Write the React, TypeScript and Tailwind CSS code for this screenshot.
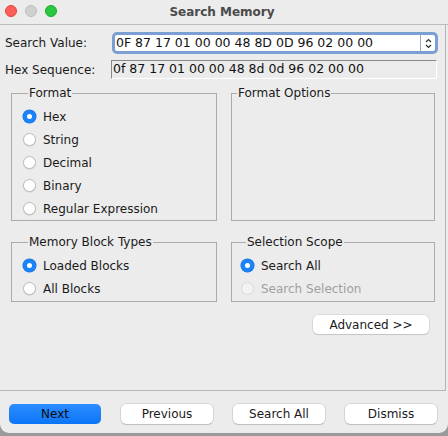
import React from 'react';

type RadioProps = { label: string; checked?: boolean; disabled?: boolean };

const Radio = ({ label, checked = false, disabled = false }: RadioProps) => (
  <div className="flex items-center h-[23px] gap-[7px]">
    {checked ? (
      <span className="w-[13px] h-[13px] rounded-full bg-[#1b83fb] flex items-center justify-center shadow-[0_0_0_0.5px_#1570d8]">
        <span className="w-[5px] h-[5px] rounded-full bg-white" />
      </span>
    ) : (
      <span
        className={`w-[13px] h-[13px] rounded-full border ${
          disabled ? 'bg-[#f3f3f3] border-[#d8d8d8]' : 'bg-white border-[#bdbdbd] shadow-[0_0.5px_1px_rgba(0,0,0,0.15)]'
        }`}
      />
    )}
    <span className={disabled ? 'text-[#a0a0a0]' : 'text-[#1a1a1a]'}>{label}</span>
  </div>
);

type GroupProps = { title: string; className: string; children?: React.ReactNode };

const Group = ({ title, className, children }: GroupProps) => (
  <fieldset className={`border border-[#ababab] ${className}`}>
    <legend className="ml-[5px] px-[1px] leading-[14px] text-[#1a1a1a]">{title}</legend>
    {children}
  </fieldset>
);

const Button = ({ label, primary = false }: { label: string; primary?: boolean }) => (
  <div
    className={`w-[92px] h-[20px] rounded-[5px] flex items-center justify-center text-[12px] ${
      primary
        ? 'bg-gradient-to-b from-[#2a8dff] to-[#0a74f7] text-[#0b0b0b]'
        : 'bg-white text-[#1a1a1a] shadow-[0_0_0_0.5px_rgba(0,0,0,0.18),0_1px_1px_rgba(0,0,0,0.12)]'
    }`}
  >
    {label}
  </div>
);

export default function App() {
  return (
    <div className="w-[448px] h-[436px] bg-[#9a9a9a] font-['DejaVu_Sans',sans-serif] text-[12px]">
      <div className="h-[433px] bg-[#ececec] rounded-b-[9px] overflow-hidden flex flex-col">
        {/* Title bar */}
        <div className="h-[25px] border-b border-[#bdbdbd] grid grid-cols-[1fr_auto_1fr] items-center">
          <div className="flex gap-[8px] pl-[5px] -mt-[3px]">
            <span className="w-[12px] h-[12px] rounded-full bg-[#fe5f57] border border-[#e0443e]" />
            <span className="w-[12px] h-[12px] rounded-full bg-[#d0d0d0] border border-[#bdbdbd]" />
            <span className="w-[12px] h-[12px] rounded-full bg-[#2ac840] border border-[#1aab29]" />
          </div>
          <div className="text-[12px] font-bold text-[#4a4a4a] -ml-[4px]">Search Memory</div>
          <div />
        </div>

        {/* Main panel */}
        <div className="h-[366px] w-[446px] border-r border-b border-[#b5b5b5] flex flex-col">
          <div className="flex items-center h-[22px] mt-[7px] pl-[5px]">
            <span className="w-[107px] text-[#1a1a1a]">Search Value:</span>
            <div className="w-[326px] h-[22px] rounded-[5px] border-[3px] border-[#7b9ed3] bg-white flex items-center">
              <span className="flex-1 pl-[1px] text-[12.5px] text-[#111]">0F 87 17 01 00 00 48 8D 0D 96 02 00 00</span>
              <span className="w-[15px] h-full border-l border-[#9aa9c2] flex items-center justify-center">
                <svg width="7" height="11" viewBox="0 0 7 11" fill="none" stroke="#333" strokeWidth="1.2">
                  <path d="M1 4 L3.5 1.5 L6 4" />
                  <path d="M1 7 L3.5 9.5 L6 7" />
                </svg>
              </span>
            </div>
          </div>

          <div className="flex items-center h-[19px] mt-[6px] pl-[5px]">
            <span className="w-[106px] text-[#1a1a1a]">Hex Sequence:</span>
            <div className="w-[326px] h-[19px] bg-[#ebebeb] border-l border-t border-[#8a8a8a] border-r border-b border-r-white border-b-white flex items-center">
              <span className="pl-[1px] text-[12.5px] text-[#111]">0f 87 17 01 00 00 48 8d 0d 96 02 00 00</span>
            </div>
          </div>

          <div className="flex mt-[7px] pl-[11px] gap-[14px]">
            <Group title="Format" className="w-[206px] h-[135px] pl-[11px] pt-[5px]">
              <Radio label="Hex" checked />
              <Radio label="String" />
              <Radio label="Decimal" />
              <Radio label="Binary" />
              <Radio label="Regular Expression" />
            </Group>
            <Group title="Format Options" className="w-[204px] h-[135px]" />
          </div>

          <div className="flex mt-[14px] pl-[11px] gap-[14px]">
            <Group title="Memory Block Types" className="w-[206px] h-[67px] pl-[11px] pt-[5px]">
              <Radio label="Loaded Blocks" checked />
              <Radio label="All Blocks" />
            </Group>
            <Group title="Selection Scope" className="w-[204px] h-[67px] pl-[9px] pt-[5px]">
              <Radio label="Search All" checked />
              <Radio label="Search Selection" disabled />
            </Group>
          </div>

          <div className="flex justify-end mt-[13px] pr-[16px]">
            <div className="w-[116px] h-[19px] rounded-[5px] bg-white flex items-center justify-center text-[#1a1a1a] shadow-[0_0_0_0.5px_rgba(0,0,0,0.15),0_1px_1px_rgba(0,0,0,0.1)]">
              Advanced &gt;&gt;
            </div>
          </div>
        </div>

        {/* Button bar */}
        <div className="flex gap-[20px] pl-[9px] pt-[13px]">
          <Button label="Next" primary />
          <Button label="Previous" />
          <Button label="Search All" />
          <Button label="Dismiss" />
        </div>
      </div>
    </div>
  );
}
